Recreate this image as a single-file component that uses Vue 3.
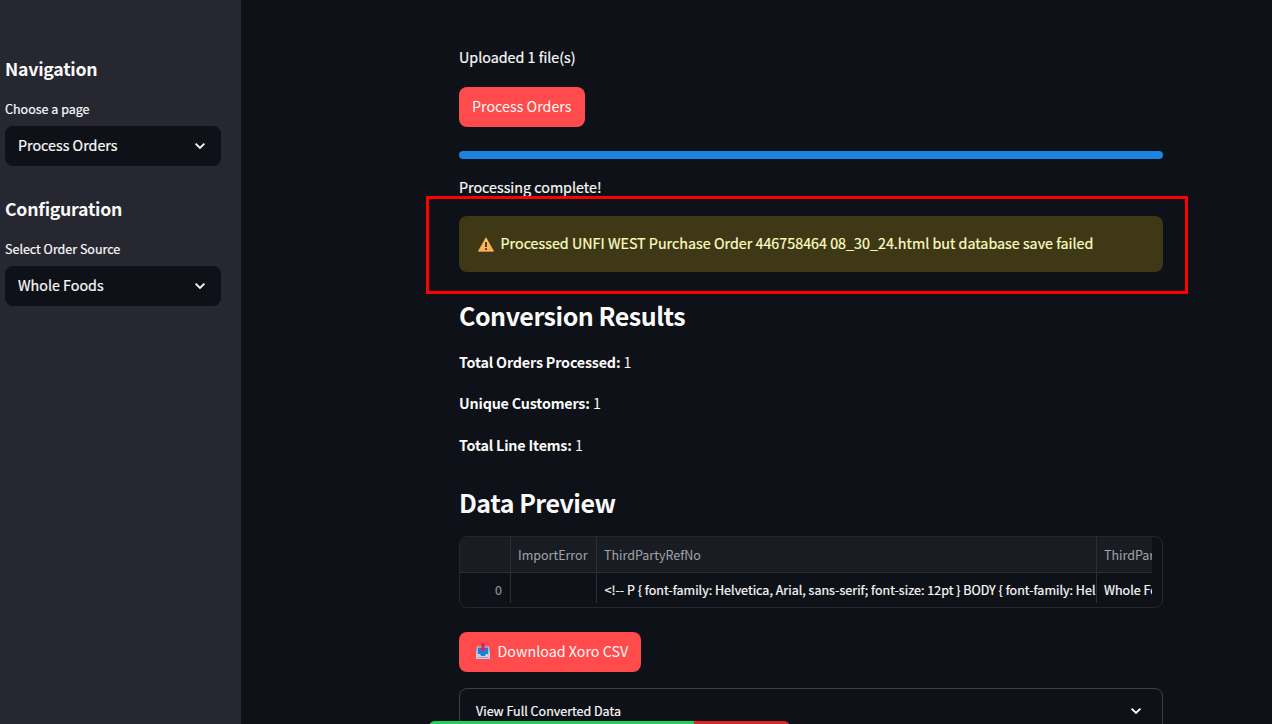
<script setup>
const groups = [
  { title: 'Navigation', label: 'Choose a page', value: 'Process Orders' },
  { title: 'Configuration', label: 'Select Order Source', value: 'Whole Foods' },
]
const stats = [
  { label: 'Total Orders Processed:', value: 1 },
  { label: 'Unique Customers:', value: 1 },
  { label: 'Total Line Items:', value: 1 },
]
const refNo = '<!-- P { font-family: Helvetica, Arial, sans-serif; font-size: 12pt } BODY { font-family: Hel'
</script>

<template>
  <div class="app">
    <aside class="sidebar">
      <section v-for="g in groups" :key="g.title" class="group">
        <h3>{{ g.title }}</h3>
        <label>{{ g.label }}</label>
        <div class="select">
          <span>{{ g.value }}</span>
          <svg class="chevron" viewBox="0 0 12 8"><path d="M1.600 1.600 6 6l4.400-4.400" /></svg>
        </div>
      </section>
    </aside>

    <main>
      <p class="text">Uploaded 1 file(s)</p>
      <button class="btn process"><span>Process Orders</span></button>
      <div class="progress"></div>
      <p class="text">Processing complete!</p>

      <div class="alert">
        <svg class="warn" viewBox="0 0 16 15">
          <defs>
            <linearGradient id="warnFill" x1="0" y1="0" x2="0" y2="1">
              <stop offset="0" stop-color="#ffcb4f" />
              <stop offset="1" stop-color="#ffab58" />
            </linearGradient>
          </defs>
          <path d="M8 .7 15.600 14.200H.4Z" fill="url(#warnFill)" stroke="#ffb254" stroke-width=".8" stroke-linejoin="round" />
          <path d="M7 5h2v5H7zM7 11.200h2v1.800H7z" fill="#493945" />
        </svg>
        <span class="alert-text">Processed UNFI WEST Purchase Order 446758464 08_30_24.html but database save failed</span>
        <div class="highlight"></div>
      </div>

      <h2 class="results">Conversion Results</h2>
      <p v-for="s in stats" :key="s.label" class="stat"><b>{{ s.label }}</b> {{ s.value }}</p>
      <h2 class="preview">Data Preview</h2>

      <div class="table">
        <div class="row head">
          <div class="cell"></div>
          <div class="cell">ImportError</div>
          <div class="cell">ThirdPartyRefNo</div>
          <div class="cell">ThirdPartySource</div>
        </div>
        <div class="row body">
          <div class="cell index">0</div>
          <div class="cell"></div>
          <div class="cell ref">{{ refNo }}</div>
          <div class="cell">Whole Foods</div>
        </div>
      </div>

      <button class="btn download">
        <svg class="inbox" viewBox="0 0 14 17">
          <path d="M1 3.500h12l1 7.500v5H0v-5z" fill="#b6d5f2" />
          <path d="M1.800 4.500h10.400v7H9.800L8.800 13H5.200l-1-1.500H1.800z" fill="#1683d8" />
          <path d="M0 11h3.800l1.200 2h4l1.200-2H14v4.200a.8.8 0 0 1-.8.8H.8a.8.8 0 0 1-.8-.8z" fill="#d5c9df" />
          <path d="M1.500 14h11v1h-11z" fill="#ad9bc3" />
          <path d="M5.500 0h3v5h2.300L7 9 3.200 5h2.300z" fill="#c92c60" />
        </svg>
        <span>Download Xoro CSV</span>
      </button>

      <div class="expander">
        <span>View Full Converted Data</span>
        <svg class="chevron" viewBox="0 0 12 8"><path d="M1.600 1.600 6 6l4.400-4.400" /></svg>
      </div>
    </main>
    <div class="strip"><i></i></div>
  </div>
</template>

<style>
html, body { margin: 0; overflow: hidden; background: #0e1117; }
</style>

<style scoped>
.app {
  position: relative;
  display: flex;
  width: 1272px;
  height: 724px;
  overflow: hidden;
  background: #0e1117;
  color: #fafafa;
  font-family: "Noto Sans CJK SC", "Noto Sans", sans-serif;
  font-size: 14.3px;
  line-height: 26px;
  white-space: nowrap;
}
h2, h3, p { margin: 0; }
.text, label, .select, .alert, .body, .expander { -webkit-text-stroke: .2px; }
.sidebar {
  box-sizing: border-box;
  width: 241px;
  flex: none;
  padding: 55px 20px 0 5px;
  background: #262730;
}
.group { height: 140px; }
h3 { font-size: 17.700px; font-weight: 700; line-height: 26px; letter-spacing: -.24px; }
label { display: block; margin-top: 18px; font-size: 12.5px; line-height: 20px; }
.select {
  display: flex;
  align-items: center;
  justify-content: space-between;
  box-sizing: border-box;
  height: 40px;
  margin-top: 7px;
  padding: 0 15px 0 13px;
  border-radius: 8px;
  background: #0e1117;
}
.select span, .btn span, .alert-text { padding-bottom: 2px; }
.alert-text { letter-spacing: .008px; }
.chevron { width: 12px; height: 8px; fill: none; stroke: #fafafa; stroke-width: 1.9; }
main { width: 704px; margin-left: 218px; padding-top: 44px; }
.text { height: 26px; }
.btn {
  display: flex;
  align-items: center;
  box-sizing: border-box;
  height: 40px;
  padding: 0 0 0 13px;
  border: 0;
  border-radius: 8px;
  background: #ff4b4b;
  color: #fafafa;
  font: inherit;
}
.process { width: 126px; margin-top: 17px; }
.progress { height: 8px; margin: 24px 0 15px; border-radius: 4px; background: #1c83e1; }
.alert {
  position: relative;
  display: flex;
  align-items: center;
  height: 56px;
  margin-top: 16px;
  padding-left: 19px;
  box-sizing: border-box;
  border-radius: 8px;
  background: #3e3816;
  color: #ffffc2;
}
.warn { width: 16px; height: 15px; margin-right: 6.500px; }
.highlight {
  position: absolute;
  inset: -20px -25px -22px -33px;
  border: 3px solid #fe0000;
}
h2 { font-size: 25px; font-weight: 700; line-height: 34px; letter-spacing: -.48px; }
.results { margin: 26px 0 17px; }
.stat { height: 26px; margin-bottom: 15.300px; }
.stat b { font-weight: 700; letter-spacing: -.18px; }
.preview { margin: 27.100px 0 17px; }
.table {
  box-sizing: border-box;
  height: 72px;
  border: 1px solid #25272e;
  border-radius: 8px;
  overflow: hidden;
  font-size: 12.5px;
}
.row { display: grid; grid-template-columns: 51px 86px 500px 55px; width: 692px; }
.cell { overflow: hidden; padding-left: 7px; border-right: 1px solid #2c2e35; }
.cell:last-child { border-right: 0; }
.head { height: 35px; line-height: 36px; background: #1a1c23; color: #a2a4aa; border-bottom: 1px solid #2c2e35; }
.body { height: 30px; line-height: 34px; }
.body .cell { height: 30px; }
.ref { padding-left: 7.500px; letter-spacing: .015px; }
.index { padding-right: 8px; text-align: right; color: #8e9096; }
.download { width: 182px; margin-top: 24px; padding-left: 17px; }
.inbox { width: 14px; height: 17px; margin-right: 7.500px; }
.expander {
  display: flex;
  align-items: center;
  justify-content: space-between;
  box-sizing: border-box;
  height: 48px;
  margin-top: 16px;
  padding: 0 20px 2px 16px;
  border: 1px solid #3e4047;
  border-radius: 8px;
  font-size: 12.5px;
}
.strip {
  position: absolute;
  left: 429px;
  top: 721px;
  width: 361px;
  height: 12px;
  border-radius: 6px;
  overflow: hidden;
  background: #dc2626;
}
.strip i { display: block; width: 265px; height: 12px; background: #22d15b; }
</style>
